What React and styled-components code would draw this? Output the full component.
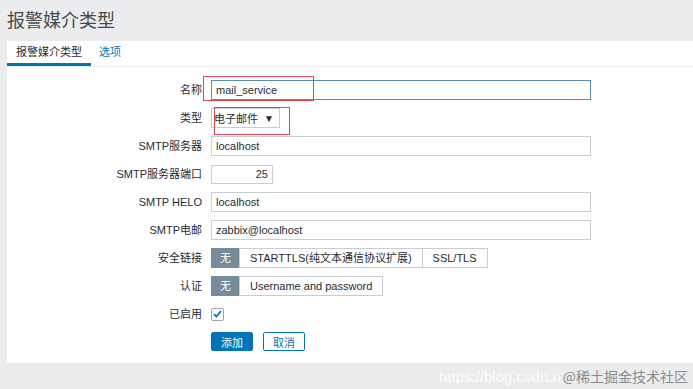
import styled, { createGlobalStyle } from 'styled-components';

const GlobalStyle = createGlobalStyle`
  html, body {
    margin: 0;
    padding: 0;
    background: #ebeced;
  }
  body {
    font-family: "Liberation Sans", "Noto Sans CJK SC", sans-serif;
    font-size: 11px;
    color: #1f2c33;
  }
`;

const Page = styled.div`
  position: relative;
  width: 693px;
  height: 389px;
  overflow: hidden;
  background: #ebeced;
  padding-left: 7px;
  box-sizing: border-box;
`;

const Title = styled.h1`
  margin: 0;
  height: 41px;
  padding-top: 4px;
  box-sizing: border-box;
  font-family: "Noto Sans CJK SC", sans-serif;
  font-size: 18px;
  line-height: 30px;
  font-weight: 400;
  color: #444b50;
`;

const Panel = styled.div`
  background: #fff;
  height: 322px;
`;

const Tabs = styled.div`
  display: flex;
  height: 25px;
  border-bottom: 1px solid #ebeced;
`;

const Tab = styled.div`
  padding: 0 ${p => (p.active ? 9 : 8)}px;
  line-height: 22px;
  font-size: 11px;
  color: ${p => (p.active ? '#1f2c33' : '#0275b8')};
  border-bottom: 3px solid ${p => (p.active ? '#0275b8' : 'transparent')};
`;

const Form = styled.div`
  display: grid;
  grid-template-columns: 195px 1fr;
  column-gap: 9px;
  row-gap: 8px;
  padding-top: 13px;
`;

const Label = styled.div`
  height: 20px;
  line-height: 20px;
  text-align: right;
  font-size: 11px;
  color: #1f2c33;
`;

const Field = styled.div`
  position: relative;
  display: flex;
  align-items: center;
  height: 20px;
`;

const Input = styled.div`
  width: ${p => p.w || 370}px;
  height: ${p => p.h || 18}px;
  line-height: ${p => p.h || 18}px;
  border: 1px solid ${p => (p.focus ? '#5a8fb0' : '#c8cdd1')};
  padding: 0 4px;
  font-size: 11px;
  color: #1f2c33;
  text-align: ${p => (p.right ? 'right' : 'left')};
  background: #fff;
`;

const Select = styled.div`
  display: flex;
  align-items: center;
  justify-content: space-between;
  width: 60px;
  height: 18px;
  border: 1px solid #c8cdd1;
  padding: 0 5px 0 2px;
  font-size: 11px;
  color: #1f2c33;
  &::after {
    content: '▼';
    font-size: 10px;
  }
`;

const Highlight = styled.div`
  position: absolute;
  left: ${p => p.l}px;
  top: ${p => p.t}px;
  width: ${p => p.w}px;
  height: ${p => p.h}px;
  border: 1px solid #e0454f;
  pointer-events: none;
`;

const Segmented = styled.div`
  display: flex;
  height: 20px;
`;

const Segment = styled.div`
  height: 18px;
  line-height: 18px;
  padding: 0 ${p => p.pad || 10}px;
  border: 1px solid ${p => (p.active ? '#768d99' : '#c8cdd1')};
  margin-left: -1px;
  background: ${p => (p.active ? '#768d99' : '#fff')};
  color: ${p => (p.active ? '#fff' : '#1f2c33')};
  font-size: 11px;
  &:first-child {
    margin-left: 0;
  }
`;

const Check = styled.div`
  width: 11px;
  height: 11px;
  border: 1px solid #9aa4aa;
  border-radius: 2px;
  display: flex;
  align-items: center;
  justify-content: center;
  background: #fff;
`;

const Buttons = styled.div`
  display: flex;
  gap: 10px;
  height: 20px;
`;

const Button = styled.button`
  height: 19px;
  padding: 0 9px;
  font-family: inherit;
  font-size: 11px;
  border-radius: 2px;
  border: 1px solid #0275b8;
  background: ${p => (p.primary ? '#0275b8' : '#fff')};
  color: ${p => (p.primary ? '#fff' : '#0275b8')};
`;

const Watermark = styled.div`
  position: absolute;
  bottom: 3px;
  right: 5px;
  display: flex;
  align-items: baseline;
  gap: 2px;
`;

const Url = styled.span`
  color: rgba(255, 255, 255, 0.85);
  font-size: 15px;
`;

const Credit = styled.span`
  color: #8a8d90;
  font-family: "Noto Sans CJK SC", serif;
  font-size: 14px;
`;

const textRows = [
  { label: 'SMTP服务器', value: 'localhost' },
];

export default function App() {
  return (
    <>
      <GlobalStyle />
      <Page>
        <Title>报警媒介类型</Title>
        <Panel>
          <Tabs>
            <Tab active>报警媒介类型</Tab>
            <Tab>选项</Tab>
          </Tabs>
          <Form>
            <Label>名称</Label>
            <Field>
              <Input focus>mail_service</Input>
              <Highlight l={-8} t={-4} w={109} h={23} />
            </Field>

            <Label>类型</Label>
            <Field>
              <Select>电子邮件</Select>
              <Highlight l={3} t={-1} w={74} h={26} />
            </Field>

            {textRows.map(r => (
              <>
                <Label key={r.label}>{r.label}</Label>
                <Field>
                  <Input>{r.value}</Input>
                </Field>
              </>
            ))}

            <Label>SMTP服务器端口</Label>
            <Field>
              <Input w={52} h={17} right>25</Input>
            </Field>

            <Label>SMTP HELO</Label>
            <Field>
              <Input>localhost</Input>
            </Field>

            <Label>SMTP电邮</Label>
            <Field>
              <Input>zabbix@localhost</Input>
            </Field>

            <Label>安全链接</Label>
            <Field>
              <Segmented>
                <Segment active pad={8}>无</Segment>
                <Segment>STARTTLS(纯文本通信协议扩展)</Segment>
                <Segment>SSL/TLS</Segment>
              </Segmented>
            </Field>

            <Label>认证</Label>
            <Field>
              <Segmented>
                <Segment active pad={8}>无</Segment>
                <Segment>Username and password</Segment>
              </Segmented>
            </Field>

            <Label>已启用</Label>
            <Field>
              <Check>
                <svg width="9" height="8" viewBox="0 0 9 8">
                  <path d="M1 4.2 L3.4 6.5 L8 1.2" fill="none" stroke="#0275b8" strokeWidth="1.8" />
                </svg>
              </Check>
            </Field>

            <div />
            <Buttons>
              <Button primary>添加</Button>
              <Button>取消</Button>
            </Buttons>
          </Form>
        </Panel>
        <Watermark>
          <Url>https://blog.csdn.n</Url>
          <Credit>@稀土掘金技术社区</Credit>
        </Watermark>
      </Page>
    </>
  );
}
